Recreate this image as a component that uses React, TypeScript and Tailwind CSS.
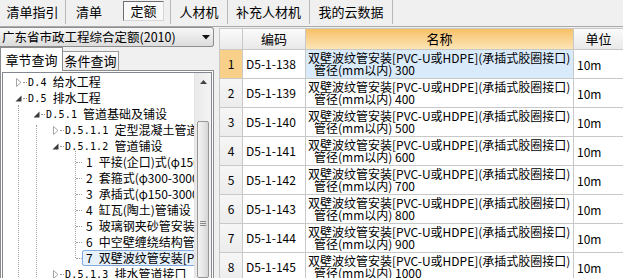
import React from "react";

type Node = { lvl: number; exp?: "open" | "closed"; code: string; name: string; sel?: boolean };

const tree: Node[] = [
  { lvl: 0, exp: "closed", code: "D.4", name: "给水工程" },
  { lvl: 0, exp: "open", code: "D.5", name: "排水工程" },
  { lvl: 1, exp: "open", code: "D.5.1", name: "管道基础及铺设" },
  { lvl: 2, exp: "closed", code: "D.5.1.1", name: "定型混凝土管道基础" },
  { lvl: 2, exp: "open", code: "D.5.1.2", name: "管道铺设" },
  { lvl: 3, code: "1", name: "平接(企口)式(φ150-1500)" },
  { lvl: 3, code: "2", name: "套箍式(φ300-3000)" },
  { lvl: 3, code: "3", name: "承插式(φ150-3000)" },
  { lvl: 3, code: "4", name: "缸瓦(陶土)管铺设" },
  { lvl: 3, code: "5", name: "玻璃钢夹砂管安装" },
  { lvl: 3, code: "6", name: "中空壁缠绕结构管安装" },
  { lvl: 3, code: "7", name: "双壁波纹管安装[PVC-U或HDPE]", sel: true },
  { lvl: 2, exp: "closed", code: "D.5.1.3", name: "排水管道接口" },
];

const rows = [
  { n: 1, code: "D5-1-138", size: "300" },
  { n: 2, code: "D5-1-139", size: "400" },
  { n: 3, code: "D5-1-140", size: "500" },
  { n: 4, code: "D5-1-141", size: "600" },
  { n: 5, code: "D5-1-142", size: "700" },
  { n: 6, code: "D5-1-143", size: "800" },
  { n: 7, code: "D5-1-144", size: "900" },
  { n: 8, code: "D5-1-145", size: "1000" },
];

const indent: Record<number, string> = { 0: "pl-[12px]", 1: "pl-[30px]", 2: "pl-[49px]" };

function Tri({ open }: { open: boolean }) {
  return open ? (
    <svg width="7" height="7" viewBox="0 0 7 7">
      <path d="M6.5 0.5 L6.5 6.5 L0.5 6.5 Z" fill="#3a3a3a" />
    </svg>
  ) : (
    <svg width="6" height="9" viewBox="0 0 6 9">
      <path d="M0.5 0.5 L5 4.5 L0.5 8.5 Z" fill="white" stroke="#a5a5a5" />
    </svg>
  );
}

function Sep() {
  return <div className="h-[24px] w-px self-start bg-[#b8b8b8]" />;
}

function TopTabs() {
  return (
    <div className="flex h-[27px] items-center border-b border-[#a9a9a9] text-[13px]">
      <div className="flex h-full w-[65px] items-center justify-center pb-[3px]">清单指引</div>
      <Sep />
      <div className="flex h-full w-[46px] items-center justify-center pb-[3px]">清单</div>
      <div className="flex h-full w-[58px] items-start pl-[11px]">
        <div className="mt-[1px] flex h-[20px] w-[41px] items-center justify-center border border-b-[#d6d6d6] border-l-[#6f6f6f] border-r-[#d6d6d6] border-t-[#6f6f6f] bg-[#f9f9f9]">
          定额
        </div>
      </div>
      <Sep />
      <div className="flex h-full w-[56px] items-center justify-center pb-[3px]">人材机</div>
      <Sep />
      <div className="flex h-full w-[81px] items-center justify-center pb-[3px]">补充人材机</div>
      <Sep />
      <div className="flex h-full w-[82px] items-center justify-center pb-[3px]">我的云数据</div>
      <Sep />
    </div>
  );
}

function TreeRow({ node }: { node: Node }) {
  if (node.lvl === 3) {
    return (
      <div className="flex h-[16px] items-center whitespace-nowrap pl-[73px]">
        <span className="mt-px w-[6px] shrink-0 border-t border-dotted border-[#9a9a9a]" />
        <span
          className={`flex h-[16px] shrink-0 items-center pl-[3px] pr-[4px] ${
            node.sel ? "rounded-[2px] border border-[#84acdd] bg-[#e6f1fc]" : "border border-transparent"
          }`}
        >
          <span className="mr-[6px]">{node.code}</span>
          {node.name}
        </span>
      </div>
    );
  }
  return (
    <div className={`flex h-[16px] items-center whitespace-nowrap ${indent[node.lvl]}`}>
      <span className="flex w-[7px] shrink-0 justify-center">
        <Tri open={node.exp === "open"} />
      </span>
      <span className="mx-[1px] w-[4px] shrink-0 border-t border-dotted border-[#9a9a9a]" />
      <span className="mr-[6px] shrink-0 font-['DejaVu_Sans_Mono',monospace] text-[10px] tracking-[0.2px]">{node.code}</span>
      <span className="shrink-0">{node.name}</span>
    </div>
  );
}

function LeftPanel() {
  return (
    <div className="flex w-[214px] min-w-0 shrink-0 flex-col overflow-hidden">
      <div className="flex h-[20px] shrink-0 items-center justify-between rounded-r-[3px] border border-l-0 border-[#8e8e8e] bg-gradient-to-b from-[#f7f7f7] to-[#dcdcdc] pl-[2px] pr-[3px] text-[12.5px]">
        <span>广东省市政工程综合定额(2010)</span>
        <svg width="8" height="5" viewBox="0 0 8 5">
          <path d="M0 0 L8 0 L4 4.5 Z" fill="#111" />
        </svg>
      </div>
      <div className="flex h-[24px] shrink-0 items-end border-b border-[#8c8c8c] text-[13px]">
        <div className="-mb-px flex h-[24px] w-[63px] items-center justify-center border border-b-0 border-[#8c8c8c] bg-white">
          章节查询
        </div>
        <div className="flex h-[19px] w-[56px] items-center justify-center border border-b-0 border-l-0 border-[#9a9a9a] bg-gradient-to-b from-[#fbfbfb] to-[#ececec]">
          条件查询
        </div>
      </div>
      <div className="flex min-h-0 min-w-0 flex-1 border-x border-[#8c8c8c] bg-white px-px pt-px">
        <div className="flex min-h-0 min-w-0 flex-1 border-x border-t border-[#828790]">
          <div className="relative min-w-0 flex-1 overflow-hidden pt-px text-[12px]">
            <div className="absolute left-[15px] top-[32px] h-[200px] border-l border-dotted border-[#a0a0a0]" />
            <div className="absolute left-[33px] top-[52px] h-[200px] border-l border-dotted border-[#a0a0a0]" />
            <div className="absolute left-[72px] top-[78px] h-[107px] border-l border-dotted border-[#a0a0a0]" />
            {tree.map((n, i) => (
              <TreeRow key={i} node={n} />
            ))}
          </div>
          <div className="flex w-[17px] shrink-0 flex-col border-l border-[#e3e3e3] bg-gradient-to-r from-[#e9e9e9] to-[#f4f4f4]">
            <div className="flex h-[17px] items-center justify-center">
              <svg width="7" height="4" viewBox="0 0 7 4">
                <path d="M0 4 L7 4 L3.5 0 Z" fill="#444" />
              </svg>
            </div>
            <div className="h-[31px]" />
            <div className="mx-[2px] flex flex-1 flex-col items-center rounded-[2px] border border-[#979797] bg-gradient-to-r from-[#f3f3f3] via-[#e7e7e7] to-[#d5d5d5] pt-[99px]">
              <div className="w-[6px] border-t border-[#8a8a8a]" />
              <div className="mt-[1px] w-[6px] border-t border-[#8a8a8a]" />
              <div className="mt-[1px] w-[6px] border-t border-[#8a8a8a]" />
            </div>
          </div>
        </div>
      </div>
    </div>
  );
}

function Grid() {
  const line = "border-r border-b border-[#c8c8c8]";
  return (
    <div className="mt-px min-w-0 flex-1 overflow-hidden border-l border-t border-[#c8c8c8] bg-white text-[12px]">
      <div className="flex h-[21px] whitespace-nowrap">
        <div className={`w-[23px] shrink-0 bg-gradient-to-b from-[#fbfbfb] to-[#e9e9e9] ${line}`} />
        <div className={`flex w-[63px] shrink-0 items-center justify-center bg-gradient-to-b from-[#fbfbfb] to-[#e9e9e9] text-[13px] ${line}`}>
          编码
        </div>
        <div className={`flex w-[268px] shrink-0 items-center justify-center bg-gradient-to-b from-[#f6c166] to-[#fde5b6] text-[13px] ${line}`}>
          名称
        </div>
        <div className={`flex w-[60px] shrink-0 items-center justify-center pr-[10px] bg-gradient-to-b from-[#fbfbfb] to-[#e9e9e9] text-[13px] ${line}`}>
          单位
        </div>
      </div>
      {rows.map((r) => (
        <div key={r.n} className="flex h-[29px] whitespace-nowrap">
          <div
            className={`flex w-[23px] shrink-0 items-center justify-center ${line} ${
              r.n === 1 ? "bg-[#f9d08a]" : "bg-gradient-to-b from-[#f6f6f6] to-[#ececec]"
            }`}
          >
            {r.n}
          </div>
          <div className={`flex w-[63px] shrink-0 items-center pl-[3px] ${line}`}>{r.code}</div>
          <div className={`w-[268px] shrink-0 overflow-hidden pl-[2px] pt-[2px] leading-[12px] ${line} ${r.n === 1 ? "bg-[#d9eafb]" : ""}`}>
            <div>双壁波纹管安装[PVC-U或HDPE](承插式胶圈接口)</div>
            <div className="pl-[6px]">管径(mm以内) {r.size}</div>
          </div>
          <div className={`flex w-[60px] shrink-0 items-center pl-[3px] pt-[2px] ${line}`}>10m</div>
        </div>
      ))}
    </div>
  );
}

export default function App() {
  return (
    <div className="h-[278px] w-[623px] overflow-hidden bg-[#f0f0f0] font-['Noto_Sans_CJK_SC',sans-serif] text-black">
      <TopTabs />
      <div className="flex h-[251px]">
        <LeftPanel />
        <div className="w-[5px] shrink-0" />
        <Grid />
      </div>
    </div>
  );
}
